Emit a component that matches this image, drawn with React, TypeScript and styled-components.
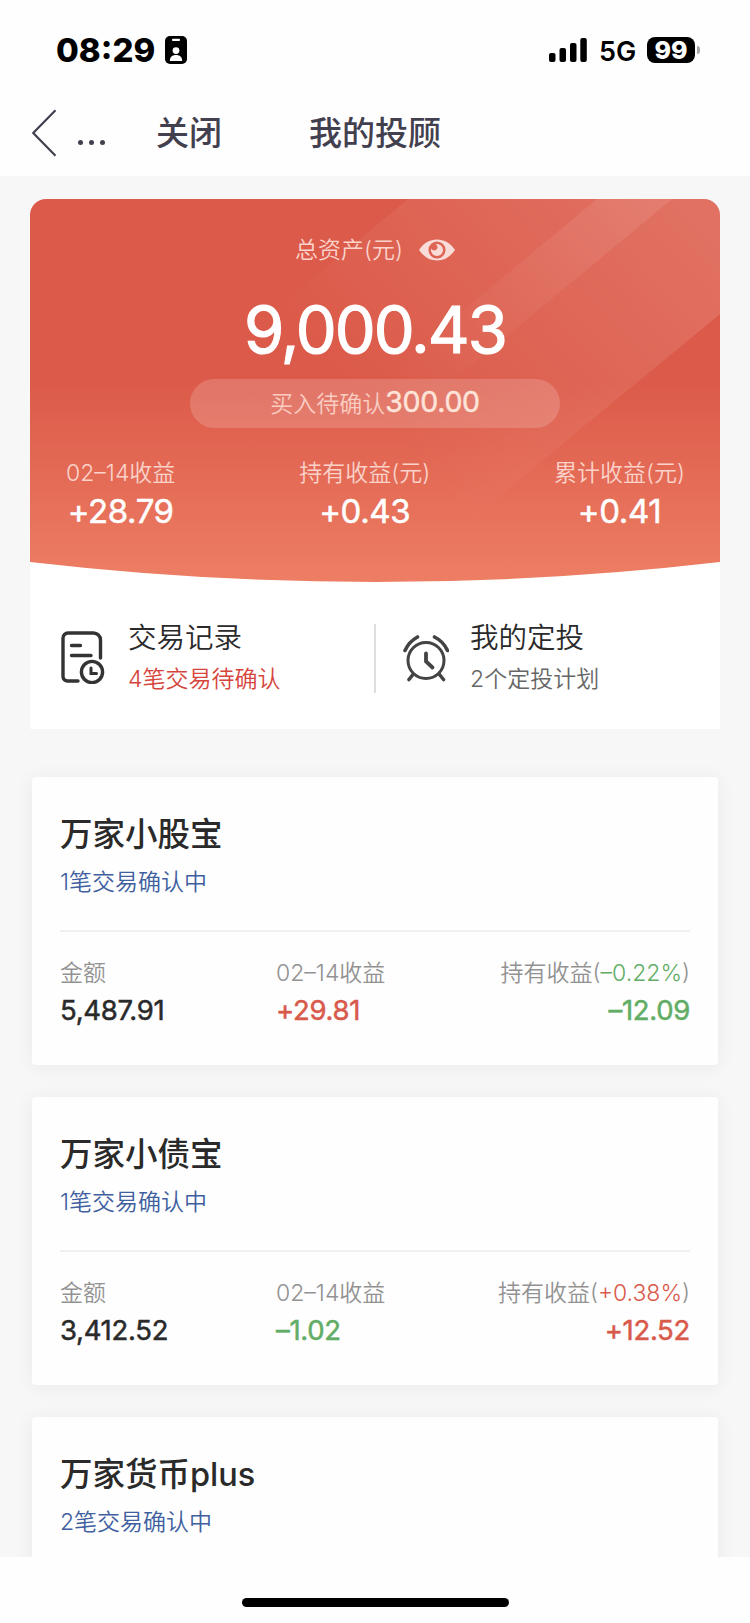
import React from "react";
import styled, { createGlobalStyle } from "styled-components";

const GlobalStyle = createGlobalStyle`
  * { box-sizing: border-box; }
  body {
    margin: 0;
    background: #fefefe;
    font-family: Inter, "Noto Sans CJK SC", sans-serif;
    font-weight: 400;
    color: #2a2a2a;
    white-space: nowrap;
  }
`;

type Tone = "up" | "down" | "plain";
const tones: Record<Tone, string> = { up: "#d85a4b", down: "#62ad66", plain: "#2a2a2a" };

const Screen = styled.div`
  width: 750px;
  height: 1623px;
  display: flex;
  flex-direction: column;
  overflow: hidden;
`;

const StatusBar = styled.header`
  flex: none;
  height: 100px;
  padding: 0 50px 0 56px;
  display: flex;
  align-items: center;
  color: #000;
`;

const Time = styled.span`
  width: 109px;
  font-size: 33px;
  font-weight: 800;
  line-height: 40px;
`;

const StatusRight = styled.div`
  margin-left: auto;
  display: flex;
  align-items: center;
`;

const Network = styled.span`
  width: 48px;
  margin-left: 12px;
  font-size: 27px;
  font-weight: 600;
  line-height: 32px;
  padding-top: 3px;
`;

const Battery = styled.span`
  width: 48px;
  height: 26px;
  border-radius: 8px;
  background: #000;
  color: #fff;
  font-size: 25px;
  font-weight: 800;
  line-height: 26px;
  text-align: center;
`;

const BatteryNub = styled.span`
  width: 3px;
  height: 8px;
  margin-left: 2px;
  border-radius: 0 3px 3px 0;
  background: #a8a8a8;
`;

const NavBar = styled.nav`
  flex: none;
  height: 76px;
  padding: 0 32px 11px;
  display: flex;
  align-items: center;
  color: #42404f;
  font-size: 33px;
  font-weight: 500;
`;

const Dots = styled.span`
  display: flex;
  gap: 6px;
  margin: 20px 0 0 21px;
  i { width: 5px; height: 5px; border-radius: 50%; background: currentColor; }
`;

const NavText = styled.span<{ $gap: number }>`
  margin-left: ${(p) => p.$gap}px;
  line-height: 48px;
`;

const Content = styled.main`
  flex: none;
  height: 1381px;
  overflow: hidden;
  background: #f7f7f7;
  padding: 23px 30px 0;
`;

const Overview = styled.section`
  height: 530px;
  border-radius: 16px 16px 0 0;
  overflow: hidden;
  background: #fff;
`;

const Hero = styled.div`
  position: relative;
  height: 384px;
  padding: 34px 35px 0;
  display: flex;
  flex-direction: column;
  align-items: center;
  color: #fff;
`;

const HeroArt = styled.svg`
  position: absolute;
  inset: 0;
`;

const HeroRow = styled.div`
  position: relative;
  height: 34px;
  display: flex;
  align-items: center;
  gap: 16px;
`;

const HeroLabel = styled.span`
  font-size: 23px;
  font-weight: 350;
  line-height: 34px;
  color: #fbd3cb;
`;

const Total = styled.div`
  position: relative;
  margin-top: 23px;
  height: 80px;
  font-size: 65px;
  -webkit-text-stroke: 1.1px currentColor;
  line-height: 80px;
  letter-spacing: -2px;
`;

const Pending = styled.div`
  position: relative;
  margin-top: 9px;
  width: 370px;
  height: 49px;
  padding-bottom: 4px;
  border-radius: 25px;
  background: rgba(255, 255, 255, 0.17);
  display: flex;
  align-items: center;
  justify-content: center;
  color: #fbcdc2;
  font-size: 23px;
  font-weight: 350;
  b {
    font-size: 28.5px;
    font-weight: 400;
    letter-spacing: -0.3px;
    color: #fee3d9;
    -webkit-text-stroke: 0.5px currentColor;
  }
`;

const HeroStats = styled.div`
  position: relative;
  align-self: stretch;
  margin-top: 28px;
  padding-left: 1px;
  display: flex;
  justify-content: space-between;
`;

const HeroStat = styled.div`
  display: flex;
  flex-direction: column;
  align-items: center;
  b {
    font-size: 33px;
    font-weight: 400;
    line-height: 42px;
    letter-spacing: -0.4px;
    -webkit-text-stroke: 0.5px currentColor;
  }
`;

const Shortcuts = styled.div`
  height: 146px;
  display: flex;
`;

const Shortcut = styled.div<{ $pad: number }>`
  width: 345px;
  padding: 34px 0 0 ${(p) => p.$pad}px;
  display: flex;
`;

const IconSlot = styled.span<{ $top: number }>`
  width: 67px;
  padding-top: ${(p) => p.$top}px;
`;

const Divider = styled.span`
  width: 2px;
  height: 69px;
  margin-top: 41px;
  background: #dedede;
`;

const ShortcutTitle = styled.div`
  font-size: 28.5px;
  font-weight: 350;
  line-height: 42px;
`;

const ShortcutNote = styled.div<{ $alert?: boolean }>`
  font-size: 23px;
  font-weight: 350;
  line-height: 40px;
  color: ${(p) => (p.$alert ? "#d6453c" : "#666")};
`;

const FundCard = styled.article`
  height: 288px;
  margin: 0 2px 32px;
  padding: 34px 28px 0;
  border-radius: 4px;
  background: #fefefe;
  box-shadow: 0 2px 20px rgba(0, 0, 0, 0.06);
`;

const FundList = styled.div`
  padding-top: 48px;
`;

const FundName = styled.h2`
  margin: 0;
  font-size: 32.5px;
  font-weight: 500;
  line-height: 48px;
`;

const FundNote = styled.div`
  height: 73px;
  padding-top: 5px;
  border-bottom: 2px solid #f0f0f0;
  font-size: 23px;
  font-weight: 350;
  line-height: 36px;
  color: #405f9f;
`;

const FundStats = styled.div`
  padding-top: 24px;
  display: grid;
  grid-template-columns: 216px 1fr auto;
`;

const FundStat = styled.div<{ $end?: boolean }>`
  text-align: ${(p) => (p.$end ? "right" : "left")};
`;

const StatLabel = styled.div`
  font-size: 23px;
  font-weight: 350;
  line-height: 34px;
  color: #929292;
`;

const StatValue = styled.div<{ $tone: Tone }>`
  font-size: 27.5px;
  line-height: 40px;
  letter-spacing: -0.3px;
  -webkit-text-stroke: 0.5px currentColor;
  color: ${(p) => tones[p.$tone]};
`;

const Rate = styled.span<{ $tone: Tone }>`
  color: ${(p) => tones[p.$tone]};
`;

const HomeArea = styled.footer`
  flex: 1;
  display: flex;
  justify-content: center;
  padding-top: 41px;
`;

const HomeIndicator = styled.span`
  width: 267px;
  height: 9px;
  border-radius: 5px;
  background: #000;
`;

const BadgeIcon = () => (
  <svg width="22" height="28" viewBox="0 0 22 28">
    <rect width="22" height="28" rx="5" fill="#000" />
    <rect x="7" y="2.7" width="8" height="2.4" rx="1" fill="#fff" />
    <circle cx="11" cy="14.6" r="3.4" fill="#fff" />
    <path d="M4.8 25c0-4 2.4-6 6.2-6s6.2 2 6.2 6z" fill="#fff" />
  </svg>
);

const SignalIcon = () => (
  <svg width="38" height="24" viewBox="0 0 38 24">
    <rect x="0" y="15" width="6.5" height="9" rx="2" />
    <rect x="10.5" y="10" width="6.5" height="14" rx="2" />
    <rect x="21" y="5" width="6.5" height="19" rx="2" />
    <rect x="31.3" y="0" width="6.5" height="24" rx="2" />
  </svg>
);

const BackIcon = () => (
  <svg width="25" height="48" viewBox="0 0 25 48" fill="none" stroke="#42404f" strokeWidth="2.2">
    <path d="M23.500 1.200L1.200 24l22.300 22.800" strokeLinejoin="round" />
  </svg>
);

const EyeIcon = () => (
  <svg width="36" height="22" viewBox="0 0 37 22">
    <path
      fill="#f9dcd7"
      fillRule="evenodd"
      d="M0 11C5 3.700 11 .2 18.500 .2S32 3.700 37 11c-5 7.300-11 10.800-18.500 10.800S5 18.300 0 11zM18.500 2.200a8.800 8.800 0 1 0 0 17.600 8.800 8.800 0 0 0 0-17.600z"
    />
    <path fill="#f9dcd7" d="M18.500 4.800A6.200 6.200 0 1 1 12.300 11c0-.5.100-1 .200-1.500a3.400 3.400 0 1 0 4.600-4.500c.4-.1.900-.2 1.400-.2z" />
  </svg>
);

const RecordIcon = () => (
  <svg width="44" height="53" viewBox="0 0 44 53" fill="none" stroke="#333" strokeWidth="3.400" strokeLinecap="round">
    <path d="M39.500 27V9a7 7 0 0 0-7-7H7a5 5 0 0 0-5 5v38.500a4.500 4.500 0 0 0 4.500 4.500H17" />
    <path d="M10.500 14.500h9M10.500 24.500h19.500" />
    <circle cx="31" cy="41" r="10.600" />
    <path d="M30 37v5.500h5.500" strokeWidth="3" />
  </svg>
);

const AlarmIcon = () => (
  <svg width="46" height="47" viewBox="0 0 46 47" fill="none" stroke="#444" strokeWidth="3" strokeLinecap="round">
    <circle cx="23" cy="25.500" r="18" />
    <path d="M23 18.500v8l6.500 6" strokeWidth="3.800" />
    <path d="M2 15.500C4.500 10 9 5 14.500 2M31.500 2C37.500 5 42 10 44.500 15.500" strokeWidth="3.600" />
    <path d="M10 39.500l-4 5M36.500 39.500l4 5" strokeWidth="3.600" />
  </svg>
);

const HeroBackground = () => (
  <HeroArt width="690" height="384" viewBox="0 0 690 384">
    <defs>
      <linearGradient id="base" x1="0" y1="0" x2="0" y2="1">
        <stop offset="0" stopColor="#dc5a49" />
        <stop offset="0.480" stopColor="#dc5a49" />
        <stop offset="1" stopColor="#ed7e64" />
      </linearGradient>
      <linearGradient id="sheen" gradientUnits="userSpaceOnUse" x1="650" y1="0" x2="370" y2="250">
        <stop offset="0" stopColor="#fff" stopOpacity="0.140" />
        <stop offset="1" stopColor="#fff" stopOpacity="0" />
      </linearGradient>
      <linearGradient id="ray" gradientUnits="userSpaceOnUse" x1="610" y1="0" x2="380" y2="200">
        <stop offset="0" stopColor="#fff" stopOpacity="0.090" />
        <stop offset="1" stopColor="#fff" stopOpacity="0" />
      </linearGradient>
    </defs>
    <path d="M0 0H690V363Q345 403 0 363Z" fill="url(#base)" />
    <path d="M378 0H690V115L375 375H-70Z" fill="url(#sheen)" />
    <path d="M567 0H642L401 200H327Z" fill="url(#ray)" />
  </HeroArt>
);

interface Fund {
  name: string;
  note: string;
  amount?: string;
  day?: string;
  dayTone?: Tone;
  rate?: string;
  held?: string;
  heldTone?: Tone;
}

const funds: Fund[] = [
  { name: "万家小股宝", note: "1笔交易确认中", amount: "5,487.91", day: "+29.81", dayTone: "up", rate: "–0.22%", held: "–12.09", heldTone: "down" },
  { name: "万家小债宝", note: "1笔交易确认中", amount: "3,412.52", day: "–1.02", dayTone: "down", rate: "+0.38%", held: "+12.52", heldTone: "up" },
  { name: "万家货币plus", note: "2笔交易确认中" },
];

const heroStats = [
  ["02–14收益", "+28.79"],
  ["持有收益(元)", "+0.43"],
  ["累计收益(元)", "+0.41"],
];

export default function App() {
  return (
    <Screen>
      <GlobalStyle />
      <StatusBar>
        <Time>08:29</Time>
        <BadgeIcon />
        <StatusRight>
          <SignalIcon />
          <Network>5G</Network>
          <Battery>99</Battery>
          <BatteryNub />
        </StatusRight>
      </StatusBar>
      <NavBar>
        <BackIcon />
        <Dots><i /><i /><i /></Dots>
        <NavText $gap={51}>关闭</NavText>
        <NavText $gap={87}>我的投顾</NavText>
      </NavBar>
      <Content>
        <Overview>
          <Hero>
            <HeroBackground />
            <HeroRow>
              <HeroLabel>总资产(元)</HeroLabel>
              <EyeIcon />
            </HeroRow>
            <Total>9,000.43</Total>
            <Pending>买入待确认<b>300.00</b></Pending>
            <HeroStats>
              {heroStats.map(([label, value]) => (
                <HeroStat key={label}>
                  <HeroLabel>{label}</HeroLabel>
                  <b>{value}</b>
                </HeroStat>
              ))}
            </HeroStats>
          </Hero>
          <Shortcuts>
            <Shortcut $pad={31}>
              <IconSlot $top={14}><RecordIcon /></IconSlot>
              <div>
                <ShortcutTitle>交易记录</ShortcutTitle>
                <ShortcutNote $alert>4笔交易待确认</ShortcutNote>
              </div>
            </Shortcut>
            <Divider />
            <Shortcut $pad={27}>
              <IconSlot $top={18}><AlarmIcon /></IconSlot>
              <div>
                <ShortcutTitle>我的定投</ShortcutTitle>
                <ShortcutNote>2个定投计划</ShortcutNote>
              </div>
            </Shortcut>
          </Shortcuts>
        </Overview>
        <FundList>
          {funds.map((f) => (
            <FundCard key={f.name}>
              <FundName>{f.name}</FundName>
              <FundNote>{f.note}</FundNote>
              {f.amount && (
                <FundStats>
                  <FundStat>
                    <StatLabel>金额</StatLabel>
                    <StatValue $tone="plain">{f.amount}</StatValue>
                  </FundStat>
                  <FundStat>
                    <StatLabel>02–14收益</StatLabel>
                    <StatValue $tone={f.dayTone ?? "plain"}>{f.day}</StatValue>
                  </FundStat>
                  <FundStat $end>
                    <StatLabel>
                      持有收益(<Rate $tone={f.heldTone ?? "plain"}>{f.rate}</Rate>)
                    </StatLabel>
                    <StatValue $tone={f.heldTone ?? "plain"}>{f.held}</StatValue>
                  </FundStat>
                </FundStats>
              )}
            </FundCard>
          ))}
        </FundList>
      </Content>
      <HomeArea>
        <HomeIndicator />
      </HomeArea>
    </Screen>
  );
}
